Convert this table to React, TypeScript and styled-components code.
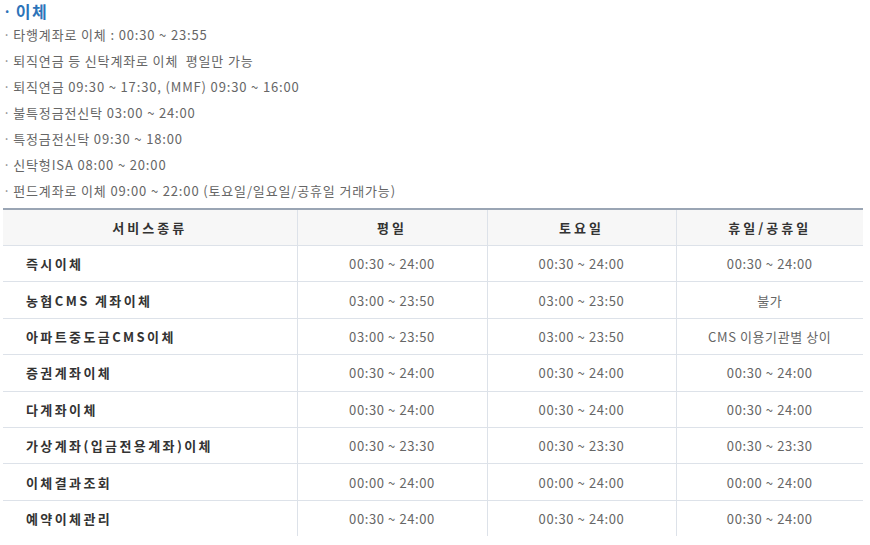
import styled, { createGlobalStyle } from "styled-components";

const GlobalStyle = createGlobalStyle`
  body {
    margin: 0;
    background: #fff;
    font-family: "Noto Sans CJK KR", "Noto Sans", sans-serif;
  }
`;

const notices = [
  "타행계좌로 이체 : 00:30 ~ 23:55",
  "퇴직연금 등 신탁계좌로 이체  평일만 가능",
  "퇴직연금 09:30 ~ 17:30, (MMF) 09:30 ~ 16:00",
  "불특정금전신탁 03:00 ~ 24:00",
  "특정금전신탁 09:30 ~ 18:00",
  "신탁형ISA 08:00 ~ 20:00",
  "펀드계좌로 이체 09:00 ~ 22:00 (토요일/일요일/공휴일 거래가능)",
];

const rows = [
  ["즉시이체", "00:30 ~ 24:00", "00:30 ~ 24:00", "00:30 ~ 24:00"],
  ["농협CMS 계좌이체", "03:00 ~ 23:50", "03:00 ~ 23:50", "불가"],
  ["아파트중도금CMS이체", "03:00 ~ 23:50", "03:00 ~ 23:50", "CMS 이용기관별 상이"],
  ["증권계좌이체", "00:30 ~ 24:00", "00:30 ~ 24:00", "00:30 ~ 24:00"],
  ["다계좌이체", "00:30 ~ 24:00", "00:30 ~ 24:00", "00:30 ~ 24:00"],
  ["가상계좌(입금전용계좌)이체", "00:30 ~ 23:30", "00:30 ~ 23:30", "00:30 ~ 23:30"],
  ["이체결과조회", "00:00 ~ 24:00", "00:00 ~ 24:00", "00:00 ~ 24:00"],
  ["예약이체관리", "00:30 ~ 24:00", "00:30 ~ 24:00", "00:30 ~ 24:00"],
];

const Page = styled.div`
  padding: 0 0 0 3px;
  width: 860px;
`;

const Title = styled.h3`
  margin: 0;
  height: 22px;
  display: flex;
  align-items: center;
  gap: 3px;
  font-size: 16px;
  font-weight: 700;
  letter-spacing: 1.5px;
  color: #2d73b9;
`;

const Dot = styled.span`
  font-size: 14px;
`;

const NoticeList = styled.ul`
  list-style: none;
  margin: 0 0 4px;
  padding: 0;
`;

const Notice = styled.li`
  height: 26px;
  line-height: 26px;
  font-size: 13px;
  color: #666;
  white-space: pre;
  letter-spacing: 0.85px;

  &::before {
    content: "· ";
    color: #888;
    letter-spacing: 0;
  }
`;

const Table = styled.table`
  width: 860px;
  border-collapse: collapse;
  table-layout: fixed;
  border-top: 2px solid #9aa5b4;
  font-size: 13px;
`;

const Head = styled.th`
  height: 35px;
  padding: 0;
  background: #f7f7f7;
  border-bottom: 1px solid #dde2e9;
  border-left: 1px solid #dde2e9;
  font-weight: 700;
  color: #333;
  letter-spacing: 3px;
  &:first-child {
    border-left: none;
  }
`;

const Cell = styled.td<{ $name?: boolean }>`
  height: 35.4px;
  padding: ${(p) => (p.$name ? "0 0 0 23px" : "0")};
  border-bottom: 1px solid #dde2e9;
  border-left: ${(p) => (p.$name ? "none" : "1px solid #dde2e9")};
  text-align: ${(p) => (p.$name ? "left" : "center")};
  font-weight: ${(p) => (p.$name ? 700 : 400)};
  color: ${(p) => (p.$name ? "#333" : "#666")};
  letter-spacing: ${(p) => (p.$name ? "2.4px" : "0.6px")};
`;

const LastRow = styled.tr`
  td {
    border-bottom: none;
  }
`;

export default function App() {
  return (
    <Page>
      <GlobalStyle />
      <Title>
        <Dot>·</Dot>이체
      </Title>
      <NoticeList>
        {notices.map((n) => (
          <Notice key={n}>{n}</Notice>
        ))}
      </NoticeList>
      <Table>
        <colgroup>
          <col style={{ width: 294 }} />
          <col style={{ width: 190 }} />
          <col style={{ width: 189 }} />
          <col style={{ width: 187 }} />
        </colgroup>
        <thead>
          <tr>
            <Head>서비스종류</Head>
            <Head>평일</Head>
            <Head>토요일</Head>
            <Head>휴일/공휴일</Head>
          </tr>
        </thead>
        <tbody>
          {rows.map((r, i) => {
            const cells = r.map((c, j) => (
              <Cell key={j} $name={j === 0}>
                {c}
              </Cell>
            ));
            return i === rows.length - 1 ? (
              <LastRow key={r[0]}>{cells}</LastRow>
            ) : (
              <tr key={r[0]}>{cells}</tr>
            );
          })}
        </tbody>
      </Table>
    </Page>
  );
}
